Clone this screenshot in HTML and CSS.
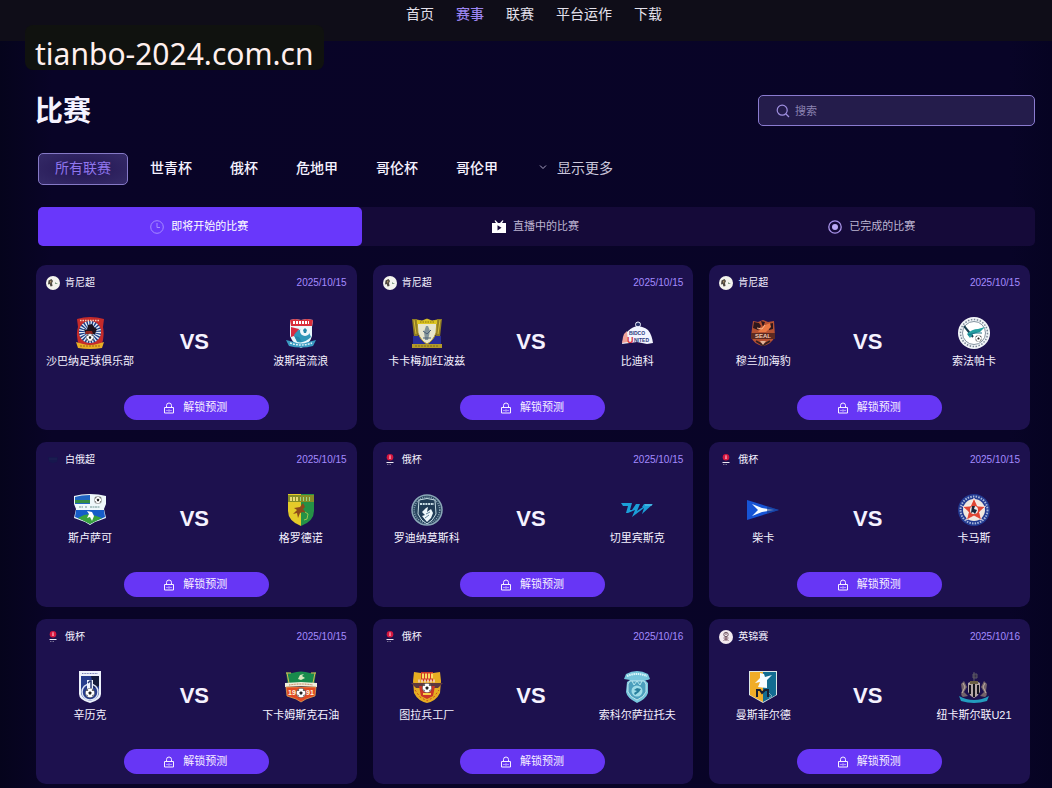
FILE: index.html
```html
<!DOCTYPE html>
<html lang="zh-CN">
<head>
<meta charset="utf-8">
<meta name="viewport" content="width=device-width, initial-scale=1">
<title>比赛</title>
<link rel="stylesheet" href="styles.css">
</head>
<body>
<svg class="sprite" aria-hidden="true">
  <symbol id="lock" viewBox="0 0 12 12"><path d="M1.500 5.500h9v5.500h-9zM3.500 5.500V3.500a2.500 2.500 0 0 1 5 0v2M3.500 8.500h1M7.500 8.500h1M6 7.500v2" fill="none" stroke="currentColor"/></symbol>
  <symbol id="kenya" viewBox="0 0 14 14"><circle cx="7" cy="7" r="7" fill="#f4f4ee"/><path d="M2.500 4.500l3-1.500 1.500 2-1 2 .5 3-2 .5L3.700 8 2 8.500z" fill="#4b463f"/><path d="M4 5l1.400-.6L5 8z" fill="#b99f6d"/><path d="M9 6l1 1 2 .3-2.600.7z" fill="#4f7857"/></symbol>
  <symbol id="rucup" viewBox="0 0 14 14"><circle cx="7" cy="4.300" r="3.300" fill="#d5163f"/><path d="M6 2.500h2L7.500 4l.7 1.700H5.800L6.500 4z" fill="#f6a3b5"/><path d="M3.500 9h7v1h-7z" fill="#eeeaf4"/><path d="M4 11.500h5" stroke="#777092" stroke-dasharray="1.500 1"/></symbol>
  <symbol id="belarus" viewBox="0 0 14 14"><path d="M2 4h10l-1 5-4 1-4-1z" fill="#17174d"/><path d="M3 6h8" stroke="#1e2455"/></symbol>
  <symbol id="efl" viewBox="0 0 14 14"><circle cx="7" cy="7" r="7" fill="#f3eaf0"/><circle cx="7" cy="4.500" r="2.200" fill="none" stroke="#6d5560"/><path d="M6 4h2M4.500 8h5M7 7v4M4.500 10.500L7 9l2.500 1.500" stroke="#7c5a68" fill="none"/></symbol>
  <symbol id="ball" viewBox="0 0 10 10"><circle cx="5" cy="5" r="4.700" fill="#fff" stroke="#333" stroke-width=".5"/><path d="M5 3.200l1.700 1.300L6 6.500H4l-.7-2zM1 3l1.500-1.700.8 1.200zM9 3L7.500 1.300l-.8 1.200zM1 6.600l1.500.3.300 1.700zM9 6.600l-1.500.3-.3 1.700z" fill="#222"/></symbol>
</svg>

<header class="topbar">
  <nav class="nav" aria-label="主导航">
    <a href="#">首页</a>
    <a href="#" class="current" aria-current="page">赛事</a>
    <a href="#">联赛</a>
    <a href="#">平台运作</a>
    <a href="#">下载</a>
  </nav>
</header>
<div class="site-tag">tianbo-2024.com.cn</div>

<main class="page">
  <div class="title-row">
    <h1>比赛</h1>
    <label class="search">
      <svg viewBox="0 0 14 14" aria-hidden="true"><circle cx="6.200" cy="6.200" r="5"/><path d="M10 10l3 3"/></svg>
      <input type="search" placeholder="搜索" aria-label="搜索">
    </label>
  </div>

  <div class="filters">
    <button type="button" class="chip selected">所有联赛</button>
    <button type="button" class="chip">世青杯</button>
    <button type="button" class="chip">俄杯</button>
    <button type="button" class="chip">危地甲</button>
    <button type="button" class="chip">哥伦杯</button>
    <button type="button" class="chip">哥伦甲</button>
    <button type="button" class="chip more"><svg viewBox="0 0 8 8" aria-hidden="true"><path d="M1 2.500l3 3 3-3"/></svg>显示更多</button>
  </div>

  <div class="segments">
    <button type="button" class="segment active">
      <svg viewBox="0 0 14 14" aria-hidden="true"><g fill="none" stroke="#a68bff"><circle cx="7" cy="7" r="6.300"/><path d="M7 3v4.500h3"/></g></svg><span>即将开始的比赛</span></button>
    <button type="button" class="segment">
      <svg viewBox="0 0 14 14" aria-hidden="true"><path d="M0 3h4L2.500.8l1-.6L6 3h2L10.500.2l1 .6L10 3h4v10H0z" fill="#fff"/><path d="M5.500 5.300l4 2.500-4 2.700z" fill="#170a3b"/></svg><span>直播中的比赛</span></button>
    <button type="button" class="segment">
      <svg viewBox="0 0 14 14" aria-hidden="true"><circle cx="7" cy="7" r="6.200" fill="none" stroke="#aa95ec" stroke-width="1.300"/><circle cx="7" cy="7" r="3" fill="#bba9f5"/></svg><span>已完成的比赛</span></button>
  </div>

  <section class="matches" aria-label="比赛列表">
    <article class="card">
      <div class="card-head"><span class="league"><svg><use href="#kenya"/></svg>肯尼超</span><time>2025/10/15</time></div>
      <div class="versus">
        <div class="team"><svg viewBox="0 0 32 32"><path d="M3 2Q16-2 30 2l-1 8q2 10-2 20H6Q1 20 4 10z" fill="#c52b2a"/><circle cx="16" cy="15" r="11" fill="#193e87"/><circle cx="16" cy="15" r="5.500" fill="none" stroke="#e7edf5" stroke-width="11" stroke-dasharray=".8 .8"/><path d="M6 3.500h20" stroke="#f8c9b2" stroke-width="1.500" stroke-dasharray="1.500 1"/><path d="M10 12l3 1 1-5 4-1 2 3 3 2-2 5h-9z" fill="#1c111c"/><path d="M12 14h6l1 3h-8z" fill="#91251e"/><path d="M2 25l7 2q7 2 14 0l7-2-2 6q-12 2-24 0z" fill="#e8ae25"/><path d="M6 29h20" stroke="#a45f12" stroke-dasharray="2 1"/><use href="#ball" x="12" y="16" width="8" height="9"/></svg><span>沙巴纳足球俱乐部</span></div>
        <strong>VS</strong>
        <div class="team"><svg viewBox="0 0 32 32"><path d="M5 3l5-1 6 1 6-1 6 1-1 7v9q-2 8-11 12Q8 27 5 19z" fill="#e9f7fb"/><path d="M5 3l5-1 6 1 6-1 6 1-1 6H6z" fill="#d92f3b"/><path d="M8 5.500h16" stroke="#fff" stroke-width="3" stroke-dasharray="2 1"/><path d="M6 10l8 2-2 6-6 2z" fill="#d92c40"/><path d="M9 18q6-9 14-5l3 7q-7 7-14 5z" fill="#2f97b9"/><circle cx="20" cy="14" r="5" fill="#eff8fb"/><path d="M20 11l2 2-1 3h-2l-1-3zM9 19l5 1 3 5-5-1zM16 20l4-1" fill="#2386a8"/><path d="M1 23l8 2q7 3 14 0l8-2-3 6q-12 3-24 0z" fill="#3b9bc2"/><path d="M5 26q11 4 22 0" stroke="#d8f0f5" fill="none" stroke-width="1.500" stroke-dasharray="2 1"/></svg><span>波斯塔流浪</span></div>
      </div>
      <button type="button" class="unlock"><svg><use href="#lock"/></svg><span>解锁预测</span></button>
    </article>

    <article class="card">
      <div class="card-head"><span class="league"><svg><use href="#kenya"/></svg>肯尼超</span><time>2025/10/15</time></div>
      <div class="versus">
        <div class="team"><svg viewBox="0 0 32 32"><path d="M1 2h5l1 18H3zM26 2h5l-2 18h-4z" fill="#8f7d24"/><path d="M3 3l2 14M29 3l-2 14" stroke="#d8bc39"/><path d="M2 19h28v8H2z" fill="#282d98"/><path d="M6 3l5 1 5-2 5 2 5-1-1 13q-3 8-9 11-6-3-9-11z" fill="#e7e5cc" stroke="#b29a25"/><path d="M6 3l5 1 5-2 5 2 5-1v4H6z" fill="#ddc521"/><path d="M9 5h14" stroke="#8a7413" stroke-dasharray="1.500 1"/><path d="M15 9h2l2 5-2 9h-3l-1-8z" fill="#82949a"/><path d="M12 14l4 3 4-4M12 21h8" stroke="#4b5e75" fill="none"/><path d="M1 27h30v4H1z" fill="#b39a29"/><path d="M4 29h24" stroke="#7a6b22" stroke-dasharray="2 1"/></svg><span>卡卡梅加红波兹</span></div>
        <strong>VS</strong>
        <div class="team"><svg viewBox="0 0 32 32"><circle cx="17" cy="7.500" r="2.500" fill="#27306b" stroke="#f0f3ff"/><path d="M1 27q2-10 6-13 9-9 20-1 4 5 5 13l-6 1-10-2z" fill="#f3f4ff"/><path d="M2 20q1-4 4-6l1 11-6 1z" fill="#f0a199"/><text class="badge-bold" x="8" y="18">BIDCO</text><text class="badge-red" x="6" y="26">U</text><text class="badge-bold" x="13" y="25">NITED</text></svg><span>比迪科</span></div>
      </div>
      <button type="button" class="unlock"><svg><use href="#lock"/></svg><span>解锁预测</span></button>
    </article>

    <article class="card">
      <div class="card-head"><span class="league"><svg><use href="#kenya"/></svg>肯尼超</span><time>2025/10/15</time></div>
      <div class="versus">
        <div class="team"><svg viewBox="0 0 32 32"><path d="M6 4l5 1 5-2 5 2 6-1 1 15q-3 8-12 10Q6 27 4 19z" fill="#b65132"/><path d="M7 5l5 1 2 3-3 4-5-2zM14 4l4 1-2 5zM21 7l5-1v6l-4 1z" fill="#2d171c"/><path d="M11 15l5-6 7-3 1 4-5 5z" fill="#e97843"/><path d="M10 11l5 1 3-4" stroke="#f5b38a" fill="none"/><path d="M4 16h24v6H4z" fill="#5c2921"/><text class="badge-light" x="8" y="21">SEAL</text><path d="M9 24l7 4 7-4" stroke="#332021" stroke-width="2" fill="none"/><path d="M13 24h6l-3 4z" fill="#e3b499"/></svg><span>穆兰加海豹</span></div>
        <strong>VS</strong>
        <div class="team"><svg viewBox="0 0 32 32"><circle cx="16" cy="16" r="16" fill="#f2f5f8"/><circle cx="16" cy="16" r="13.500" fill="none" stroke="#7a8796" stroke-width="1.500" stroke-dasharray="1.500 1.500"/><circle cx="16" cy="16" r="11.500" fill="#fff" stroke="#526677" stroke-width=".7"/><path d="M6 9l9 11" stroke="#173d50" stroke-width="2"/><path d="M9 17q5-5 11-5l7-2-5 5-7 2-3 4z" fill="#239fa0"/><path d="M10 18q7-3 14-2" stroke="#1d7288" fill="none"/><use href="#ball" x="17" y="18" width="7" height="7"/></svg><span>索法帕卡</span></div>
      </div>
      <button type="button" class="unlock"><svg><use href="#lock"/></svg><span>解锁预测</span></button>
    </article>

    <article class="card">
      <div class="card-head"><span class="league"><svg><use href="#belarus"/></svg>白俄超</span><time>2025/10/15</time></div>
      <div class="versus">
        <div class="team"><svg viewBox="0 0 32 32"><path d="M0 2q7-2 16-2t16 2v8l-2 5 2 9q-5 2-11 4l-5 3-5-3-11-4 2-9-2-5z" fill="#eff8fb"/><path d="M1 3q6-2 15-2v9H1z" fill="#1f65c2"/><path d="M1 6h15v3H1z" fill="#348b42"/><path d="M2 16h28l1 7q-4 2-10 4l-5 3-5-3-10-4z" fill="#155cc8"/><path d="M4 24l6-3 6-1 12 4-12 6z" fill="#39a23d"/><path d="M13 17l5 1 2 4-2 5-2-4-3 1 2-4z" fill="#fff"/><use href="#ball" x="20" y="2" width="8" height="8"/><path d="M5 13h4M11 13h2M16 13h10" stroke="#6a9491" stroke-dasharray="2 .5"/></svg><span>斯卢萨可</span></div>
        <strong>VS</strong>
        <div class="team"><svg viewBox="0 0 32 32"><path d="M3 0h13v32Q3 27 3 17z" fill="#e4cb29"/><path d="M16 0h13v17q0 10-13 15z" fill="#259146"/><path d="M3 1h26v7H3z" fill="#858d26"/><path d="M5 5h8" stroke="#e8db77" stroke-width="4" stroke-dasharray="2 1"/><path d="M15 5h12" stroke="#9bd58b" stroke-width="4" stroke-dasharray="1 2"/><path d="M9 14l6-1 3-4 2 4-2 2 3 4-3-1-3 1-2 5-1-5-4 1 4-4z" fill="#8c491b"/><path d="M20 18l3 2-1 5-3 1" fill="none" stroke="#9ac44e"/></svg><span>格罗德诺</span></div>
      </div>
      <button type="button" class="unlock"><svg><use href="#lock"/></svg><span>解锁预测</span></button>
    </article>

    <article class="card">
      <div class="card-head"><span class="league"><svg><use href="#rucup"/></svg>俄杯</span><time>2025/10/15</time></div>
      <div class="versus">
        <div class="team"><svg viewBox="0 0 32 32"><circle cx="16" cy="16" r="15" fill="#28445e" stroke="#8aa7b7" stroke-width="1.500"/><circle cx="16" cy="16" r="12.800" fill="none" stroke="#8ea9b8" stroke-width="1.500" stroke-dasharray="1 1.200"/><path d="M8 6q8-3 16 0l1 14q-3 7-9 10-6-3-9-10z" fill="#203c56" stroke="#c6dce4"/><path d="M9 10h14" stroke="#c9dee6" stroke-width="2" stroke-dasharray="2 .7"/><path d="M11 18l4-4 2-1-1 5 4-3 2 4-2 5-4 4-5-6 3-1z" fill="#eff8fb"/><path d="M15 20l4-2M14 24l4-3" stroke="#648499"/></svg><span>罗迪纳莫斯科</span></div>
        <strong>VS</strong>
        <div class="team"><svg viewBox="0 0 32 32"><path d="M0 9h11l-2 7h2l4-6h4l-3 7 6-4h-1l2-3h9L21 20l2-6-12 9 3-7-7 3H5l2-7H2z" fill="#1b9fd8"/><path d="M24 11h7" stroke="#66cced"/></svg><span>切里宾斯克</span></div>
      </div>
      <button type="button" class="unlock"><svg><use href="#lock"/></svg><span>解锁预测</span></button>
    </article>

    <article class="card">
      <div class="card-head"><span class="league"><svg><use href="#rucup"/></svg>俄杯</span><time>2025/10/15</time></div>
      <div class="versus">
        <div class="team"><svg viewBox="0 0 32 32"><path d="M0 6l32 10L0 26z" fill="#1654d5"/><path d="M5 10l10 4 12 2-12 2-10 4 6-6z" fill="#f5fcff"/><path d="M20 12l12 4-12 4" fill="#173a8a" opacity=".6"/></svg><span>柴卡</span></div>
        <strong>VS</strong>
        <div class="team"><svg viewBox="0 0 32 32"><circle cx="16" cy="16" r="16" fill="#223a91"/><circle cx="16" cy="16" r="13.500" fill="none" stroke="#a9b8da" stroke-width="2" stroke-dasharray="1.500 1.200"/><circle cx="16" cy="16" r="11" fill="#eee7df"/><path d="M16 4l3.500 8 8 .5-6 5.500 2 8-7.500-4-7.500 4 2-8-6-5.500 8-.5z" fill="#df4633" stroke="#fff" stroke-width=".7"/><circle cx="16" cy="16" r="4" fill="#eee"/><path d="M14 12h3l-1 3 3 1-2 4-2-2-2 1z" fill="#17263a"/></svg><span>卡马斯</span></div>
      </div>
      <button type="button" class="unlock"><svg><use href="#lock"/></svg><span>解锁预测</span></button>
    </article>

    <article class="card">
      <div class="card-head"><span class="league"><svg><use href="#rucup"/></svg>俄杯</span><time>2025/10/15</time></div>
      <div class="versus">
        <div class="team"><svg viewBox="0 0 32 32"><path d="M5 0h22v23q0 6-11 9Q5 29 5 23z" fill="#edf1fb"/><path d="M7 5h18v17q0 5-9 8-9-3-9-8z" fill="#263c8c"/><path d="M17 5h8v10l-5 2z" fill="#141b3b"/><path d="M8 2.500h16" stroke="#6f79b2" stroke-dasharray="1 .6"/><circle cx="16" cy="21" r="8" fill="none" stroke="#dce4f5" stroke-width="1.500"/><path d="M13 9h6v12h-6z" fill="#eef3ff"/><path d="M14 12l2-2h1v7" stroke="#24356f" stroke-width="1.500" fill="none"/><use href="#ball" x="11" y="17" width="10" height="10"/></svg><span>辛历克</span></div>
        <strong>VS</strong>
        <div class="team"><svg viewBox="0 0 32 32"><path d="M1 1l6 1q9-3 18 0l6-1-2 14H3z" fill="#188b4c"/><path d="M1 2h5M26 2h5M2 2l2 10M30 2l-2 10" stroke="#d7b154"/><path d="M0 12l16-1 16 1v4l-16-1-16 1z" fill="#f1efdd"/><path d="M4 14q12-2 24 0" stroke="#b86e45" fill="none" stroke-dasharray="1 .6"/><path d="M1 16h30l-1 9-9 3-5 3-5-3-9-3z" fill="#e24b23" stroke="#e5b057" stroke-width=".7"/><text class="badge-white" x="3" y="24">19</text><text class="badge-white" x="21" y="24">91</text><use href="#ball" x="11" y="17" width="10" height="10"/><path d="M13 8l2-4 4-1-2 2 3 2-4 2z" fill="#d9e7bd"/></svg><span>下卡姆斯克石油</span></div>
      </div>
      <button type="button" class="unlock"><svg><use href="#lock"/></svg><span>解锁预测</span></button>
    </article>

    <article class="card">
      <div class="card-head"><span class="league"><svg><use href="#rucup"/></svg>俄杯</span><time>2025/10/16</time></div>
      <div class="versus">
        <div class="team"><svg viewBox="0 0 32 32"><path d="M3 1l7 1 6-1 6 1 7-1 1 9-1 12q-4 8-13 10Q7 30 3 22L2 10z" fill="#e6ad22"/><path d="M10 1h12v9H10z" fill="#cf3926"/><path d="M11 5h11" stroke="#f8dc66" stroke-width="5" stroke-dasharray="2 1"/><path d="M0 12h32l-5 5H5z" fill="#5e3940"/><path d="M7 10h18" stroke="#f0c5a2" stroke-width="3" stroke-dasharray="2 1"/><path d="M8 15h16l-2 10-6 3-6-3z" fill="#c93627"/><path d="M4 19l5 7 7 4 7-4 5-7" fill="none" stroke="#cd4c18" stroke-dasharray="2 2"/><use href="#ball" x="11" y="12" width="10" height="10"/><path d="M12 23h8" stroke="#f9ce47" stroke-width="2"/></svg><span>图拉兵工厂</span></div>
        <strong>VS</strong>
        <div class="team"><svg viewBox="0 0 32 32"><path d="M5 3q11-6 22 0l2 5q-4 2-5 1l3 3v10q-2 6-11 10Q6 27 5 21l1-10 3-2-6-1z" fill="#77c6dc"/><path d="M6 5q10-4 20 0" stroke="#ddf7fa" stroke-width="2" stroke-dasharray="1.500 .7" fill="none"/><path d="M9 10h14l2 3v8q-2 5-9 8-7-3-9-8v-8z" fill="#4c9fbd" stroke="#d9f3f7" stroke-width=".8"/><path d="M11 10l2 4 3-4 3 4 2-4" fill="none" stroke="#b6e8ee"/><circle cx="16" cy="20" r="5.500" fill="#9edce8"/><path d="M13 19l3-2 4 1-2 3-4 3-1-2 3-2z" fill="#287f9d"/></svg><span>索科尔萨拉托夫</span></div>
      </div>
      <button type="button" class="unlock"><svg><use href="#lock"/></svg><span>解锁预测</span></button>
    </article>

    <article class="card">
      <div class="card-head"><span class="league"><svg><use href="#efl"/></svg>英锦赛</span><time>2025/10/16</time></div>
      <div class="versus">
        <div class="team"><svg viewBox="0 0 32 32"><path d="M2 0h28v24l-14 8L2 24z" fill="#dce8e6"/><path d="M3 1h13v30L3 24z" fill="#f0ad28"/><path d="M16 1h13v23l-13 7z" fill="#126c91"/><path d="M13 2l4 1 1 3 7-2-5 5v8l-9-1 2-5-5 1 5-5z" fill="#f5fbff"/><path d="M10 26v-7h3l2 3 3-3h3v7" fill="none" stroke="#171f32" stroke-width="2"/><path d="M22 22l3 3-3 2" stroke="#7ca7bc" fill="none"/></svg><span>曼斯菲尔德</span></div>
        <strong>VS</strong>
        <div class="team"><svg viewBox="0 0 32 32"><path d="M1 25q7 4 15 4t15-4l-2 5q-13 4-26 0z" fill="#239dbf"/><path d="M15 3h4v4h-4zM16 1v9" stroke="#5b5667" fill="#393149"/><path d="M10 12q6-4 12 0v9q-2 4-6 6-4-2-6-6z" fill="#b5a7a6"/><path d="M12 14v9M16 13v13M20 14v9" stroke="#15141c" stroke-width="2"/><path d="M12 10h8v3h-8z" fill="#695d42"/><path d="M3 13l3-3 3 6-3 5 4 4-5 1q-3-2-1-6zM29 13l-3-3-3 6 3 5-4 4 5 1q3-2 1-6z" fill="#74636a"/><path d="M5 12l2 4-3 6M27 12l-2 4 3 6" stroke="#bfafa5" fill="none"/></svg><span>纽卡斯尔联U21</span></div>
      </div>
      <button type="button" class="unlock"><svg><use href="#lock"/></svg><span>解锁预测</span></button>
    </article>
  </section>
</main>
</body>
</html>
```
FILE: styles.css
```css
* { box-sizing: border-box; }

body {
  margin: 0;
  min-height: 100vh;
  background: linear-gradient(90deg, #05041c, #090427 5%, #080427 96%, #060322);
  color: #f5f2ff;
  font-family: "Liberation Sans", "Noto Sans CJK SC", sans-serif;
  font-size: 11px;
}

button, input { font: inherit; color: inherit; }

button {
  margin: 0;
  padding: 0;
  border: 0;
  background: none;
  cursor: pointer;
}

svg { flex: none; }

.sprite {
  position: absolute;
  width: 0;
  height: 0;
}

.topbar {
  display: flex;
  justify-content: center;
  height: 41px;
  padding: 4px 0 0 16px;
  background: #0f0d18;
}

.nav {
  display: flex;
  gap: 22px;
  font-size: 14px;
  line-height: 20px;
}

.nav a {
  color: #e4e1ec;
  text-decoration: none;
}

.nav .current {
  color: #9c84f0;
  font-weight: 500;
}

.site-tag {
  position: absolute;
  top: 25px;
  left: 25px;
  height: 45px;
  padding: 7px 11px 0 10px;
  border-radius: 8px;
  background: #10120f;
  color: #fff0ee;
  font-family: "Noto Sans", sans-serif;
  font-size: 30px;
  line-height: 44px;
}

.page { padding: 54px 17px 4px 35px; }

.title-row {
  display: flex;
  align-items: center;
  justify-content: space-between;
}

h1 {
  margin: 0;
  padding-top: 2px;
  font-size: 28px;
  line-height: 29px;
}

.search {
  display: flex;
  align-items: center;
  gap: 5px;
  flex: 0 1 277px;
  height: 31px;
  padding: 0 17px;
  border: 1px solid #8a7bd0;
  border-radius: 5px;
  background: #241c4b;
}

.search svg {
  width: 14px;
  height: 14px;
  fill: none;
  stroke: #9f8fe0;
  stroke-width: 1.2;
}

.search input {
  flex: 1;
  min-width: 0;
  padding: 0;
  border: 0;
  outline: 0;
  background: none;
}

.search input::placeholder {
  color: #8b82b2;
  opacity: 1;
}

.filters {
  display: flex;
  flex-wrap: wrap;
  gap: 6px;
  margin: 27px 0 22px 3px;
}

.chip {
  height: 32px;
  padding: 0 15px 4px;
  border: 1px solid transparent;
  border-radius: 5px;
  font-size: 14px;
  font-weight: 500;
}

.chip.selected {
  padding: 0 16px 4px;
  border-color: #8579c6;
  background: radial-gradient(#241653, #352b68);
  color: #8f76ed;
  font-weight: 400;
}

.chip.more {
  display: flex;
  align-items: center;
  gap: 10px;
  margin-left: 3px;
  color: #cbc7dc;
  font-weight: 400;
}

.chip.more svg {
  width: 8px;
  height: 8px;
  fill: none;
  stroke: #aaa4c4;
}

.segments {
  display: grid;
  grid-template-columns: repeat(3, 1fr);
  gap: 12px;
  margin: 0 0 19px 3px;
  border-radius: 5px;
  background: #150a39;
}

.segment {
  display: flex;
  align-items: center;
  justify-content: center;
  gap: 7px;
  height: 39px;
  padding-right: 2px;
  border-radius: 5px;
  color: #bdb5d2;
}

.segment svg {
  width: 14px;
  height: 14px;
}

.segment span, .unlock span { padding-bottom: 3px; }

.segment.active {
  background: #6937fb;
  color: #fff;
}

.matches {
  display: grid;
  grid-template-columns: repeat(3, 1fr);
  gap: 12px 16px;
  margin: 0 5px 0 1px;
}

.card {
  display: flex;
  flex-direction: column;
  padding: 11px 10px 10px;
  border-radius: 10px;
  background: #1d114e;
}

.card-head {
  display: flex;
  align-items: center;
  justify-content: space-between;
  font-size: 10px;
  line-height: 14px;
}

.league {
  display: flex;
  gap: 5px;
}

.league svg {
  width: 14px;
  height: 14px;
}

time { color: #a48bff; }

.versus {
  display: grid;
  grid-template-columns: 88px 1fr 92px;
  align-items: center;
  margin: 27px 0 26px;
  text-align: center;
}

.versus strong {
  padding-bottom: 2px;
  font-size: 22px;
  line-height: 24px;
}

.team {
  display: flex;
  flex-direction: column;
  align-items: center;
  gap: 4px;
  line-height: 16px;
  white-space: nowrap;
}

.team svg {
  width: 32px;
  height: 32px;
}

.badge-bold, .badge-red, .badge-light, .badge-white {
  font-size: 5px;
  font-weight: 700;
}

.badge-bold { fill: #2c387e; }
.badge-red { fill: #d83642; font-size: 9px; }
.badge-light { fill: #f5cdb5; font-size: 6px; }
.badge-white { fill: #fff4de; font-size: 7px; }

.unlock {
  display: flex;
  align-items: center;
  justify-content: center;
  align-self: center;
  gap: 8px;
  width: 145px;
  height: 25px;
  padding-right: 2px;
  border-radius: 13px;
  background: #6736f5;
  color: #f7efff;
}

.unlock svg {
  width: 12px;
  height: 12px;
}
```
